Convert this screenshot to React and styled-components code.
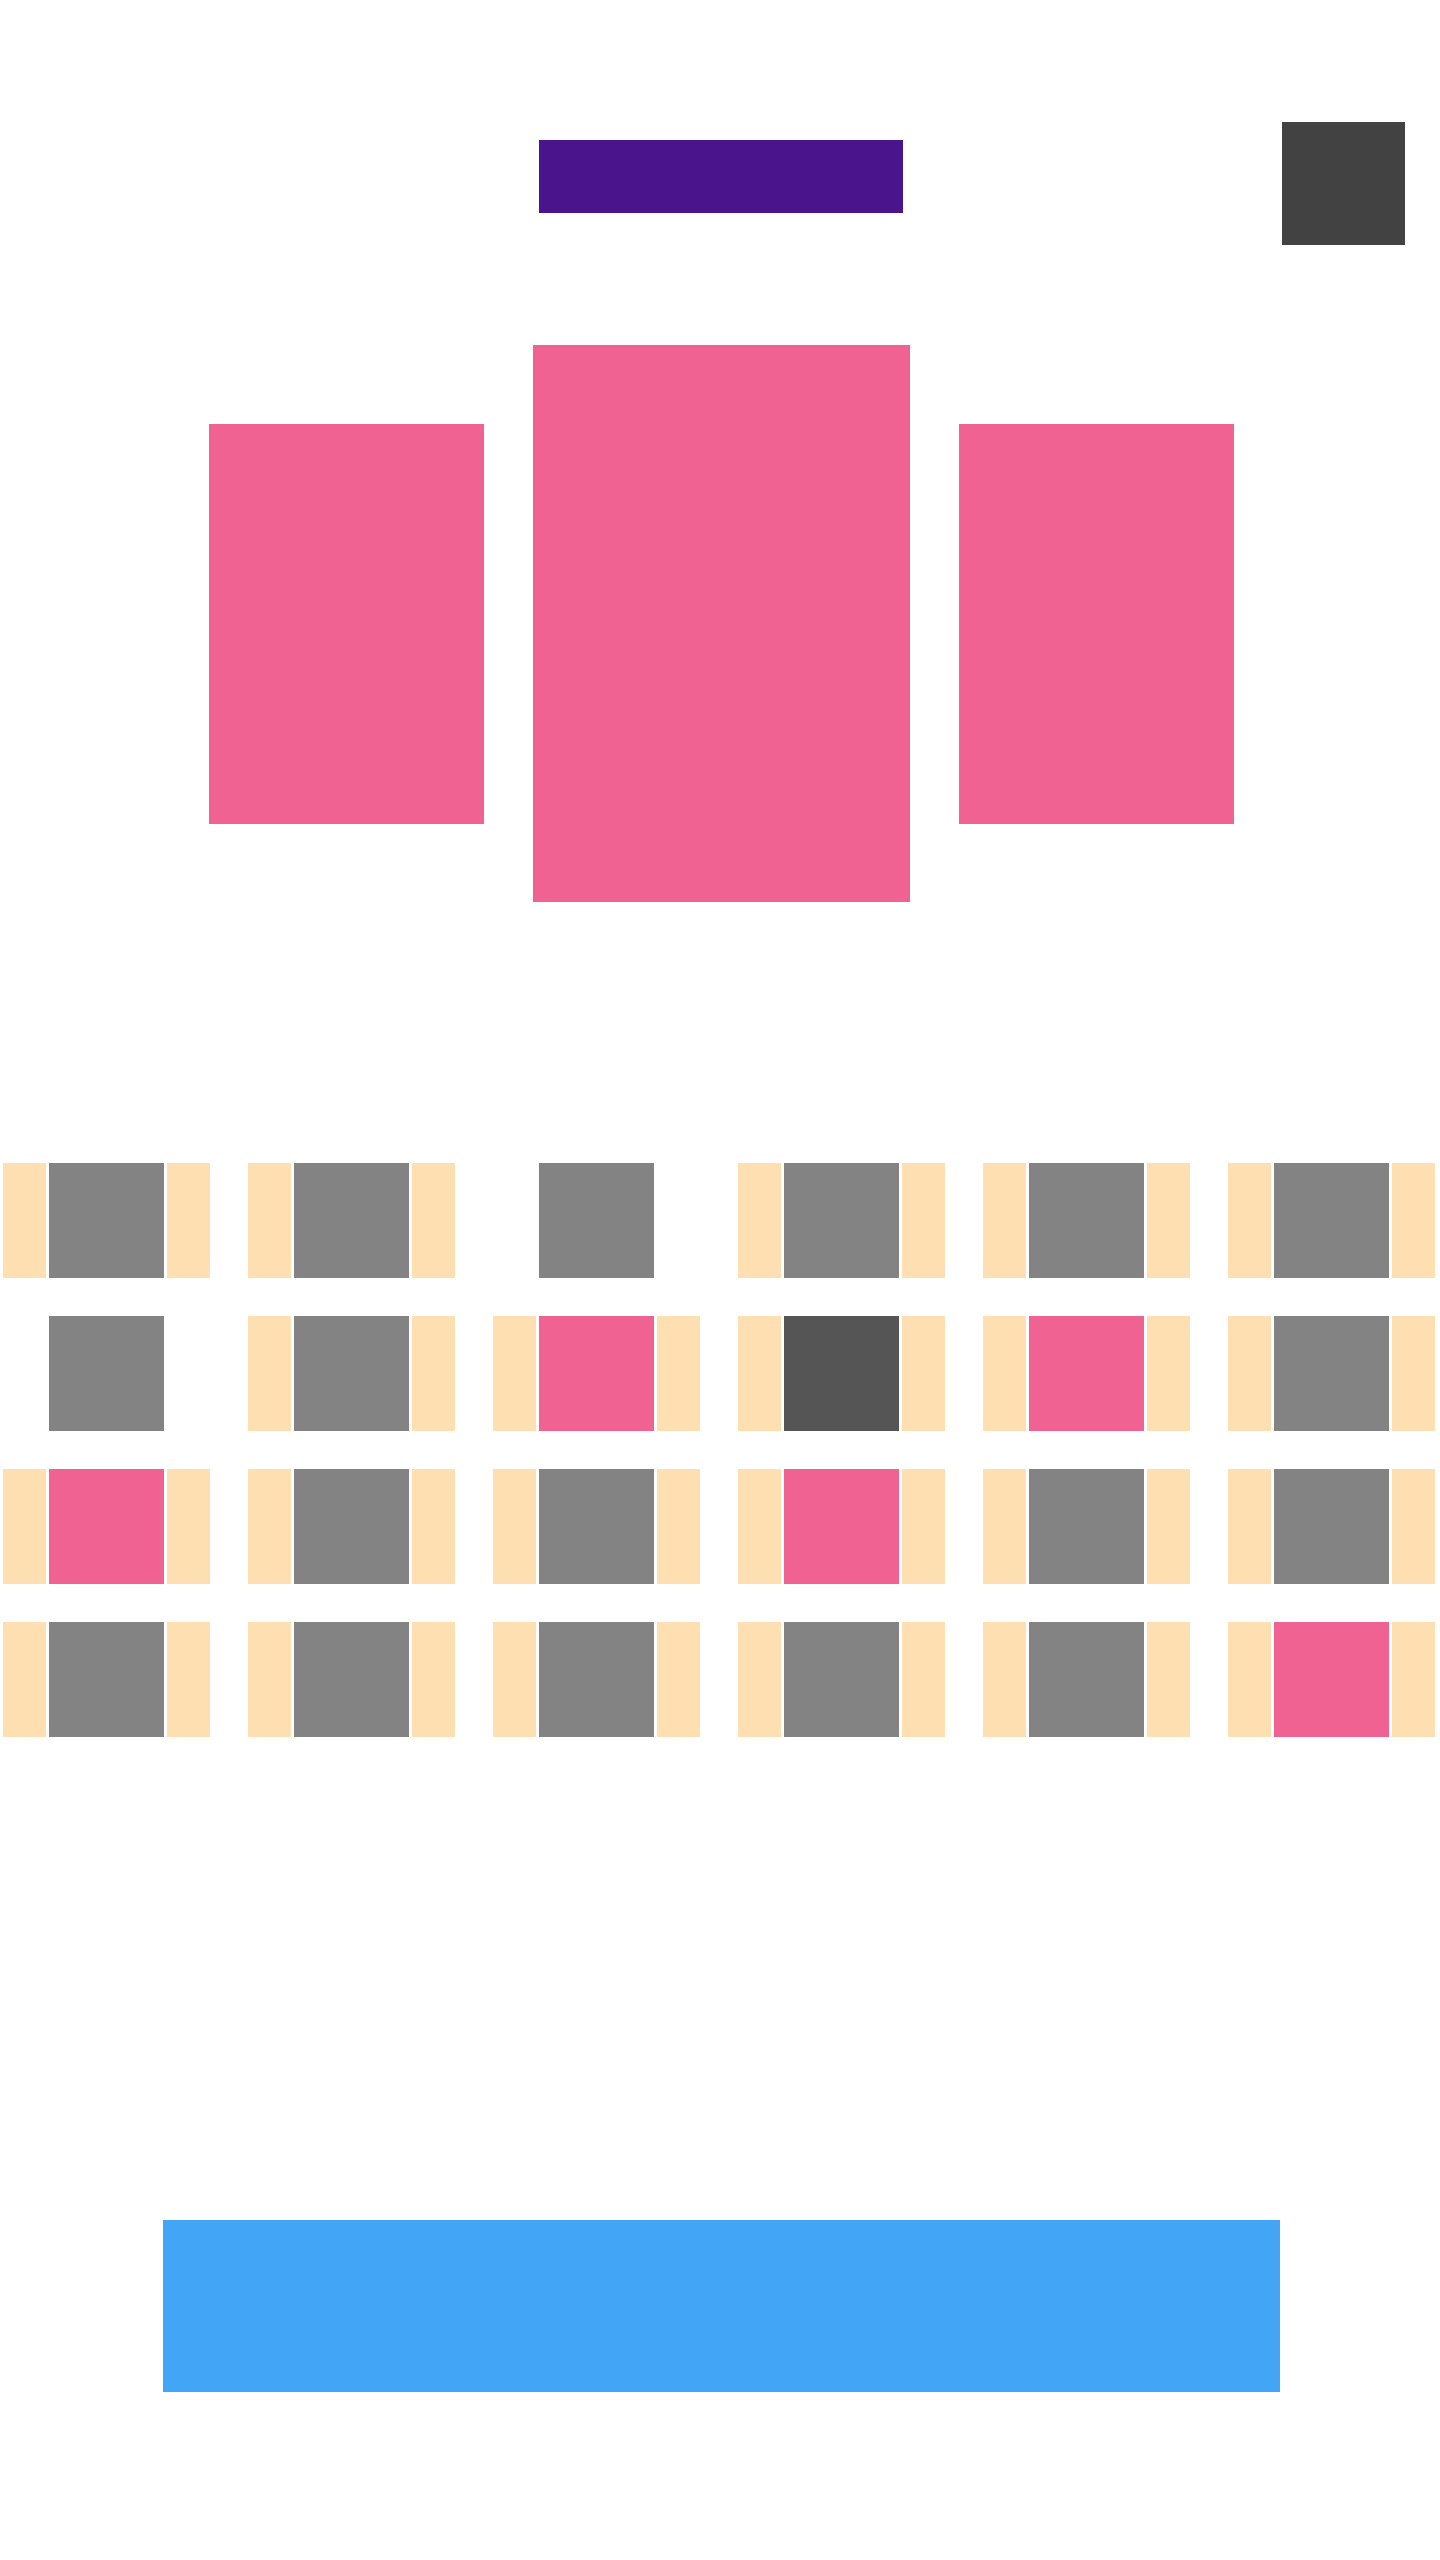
import React from "react";
import styled, { createGlobalStyle } from "styled-components";

const Global = createGlobalStyle`
  html, body { margin: 0; padding: 0; background: #ffffff; }
  body { font-family: "Liberation Sans", Arial, sans-serif; }
`;

const Page = styled.div`
  width: 1440px;
  min-height: 2560px;
  display: flex;
  flex-direction: column;
  background: #ffffff;
`;

const Header = styled.header`
  display: grid;
  grid-template-columns: 1fr auto 1fr;
  align-items: start;
  padding: 122px 0 0 2px;
`;

const TitleBar = styled.div`
  grid-column: 2;
  width: 364px;
  height: 73px;
  margin-top: 18px;
  background: #4a148c;
`;

const MenuButton = styled.button`
  grid-column: 3;
  justify-self: end;
  width: 123px;
  height: 123px;
  margin-right: 35px;
  border: 0;
  padding: 0;
  background: #424242;
`;

const Carousel = styled.section`
  display: flex;
  justify-content: center;
  align-items: center;
  gap: 49px;
  padding-left: 3px;
  margin-top: 100px;
`;

const Slide = styled.div`
  background: #f06292;
  width: ${(p) => (p.$active ? "377px" : "275px")};
  height: ${(p) => (p.$active ? "557px" : "400px")};
`;

const SeatGrid = styled.section`
  display: grid;
  grid-template-columns: repeat(6, 207px);
  column-gap: 38px;
  row-gap: 38px;
  padding-left: 3px;
  margin-top: 261px;
`;

const Cell = styled.div`
  display: flex;
  gap: 3px;
  height: 115px;
`;

const Side = styled.div`
  width: 43px;
  background: ${(p) => (p.$hidden ? "transparent" : "#fedfb2")};
`;

const colors = { g: "#838383", p: "#f06292", d: "#555555" };

const Seat = styled.div`
  width: 115px;
  background: ${(p) => colors[p.$kind]};
`;

const Footer = styled.div`
  display: flex;
  justify-content: center;
  padding-left: 3px;
  margin-top: 483px;
`;

const CTA = styled.button`
  width: 1117px;
  height: 172px;
  border: 0;
  padding: 0;
  background: #42a5f5;
`;

const rows = [
  [["g", 1], ["g", 1], ["g", 0], ["g", 1], ["g", 1], ["g", 1]],
  [["g", 0], ["g", 1], ["p", 1], ["d", 1], ["p", 1], ["g", 1]],
  [["p", 1], ["g", 1], ["g", 1], ["p", 1], ["g", 1], ["g", 1]],
  [["g", 1], ["g", 1], ["g", 1], ["g", 1], ["g", 1], ["p", 1]],
];

export default function App() {
  return (
    <>
      <Global />
      <Page>
        <Header>
          <TitleBar />
          <MenuButton aria-label="menu" />
        </Header>
        <Carousel>
          <Slide />
          <Slide $active />
          <Slide />
        </Carousel>
        <SeatGrid>
          {rows.flatMap((row, r) =>
            row.map(([kind, sides], c) => (
              <Cell key={`${r}-${c}`}>
                <Side $hidden={!sides} />
                <Seat $kind={kind} />
                <Side $hidden={!sides} />
              </Cell>
            ))
          )}
        </SeatGrid>
        <Footer>
          <CTA aria-label="action" />
        </Footer>
      </Page>
    </>
  );
}
